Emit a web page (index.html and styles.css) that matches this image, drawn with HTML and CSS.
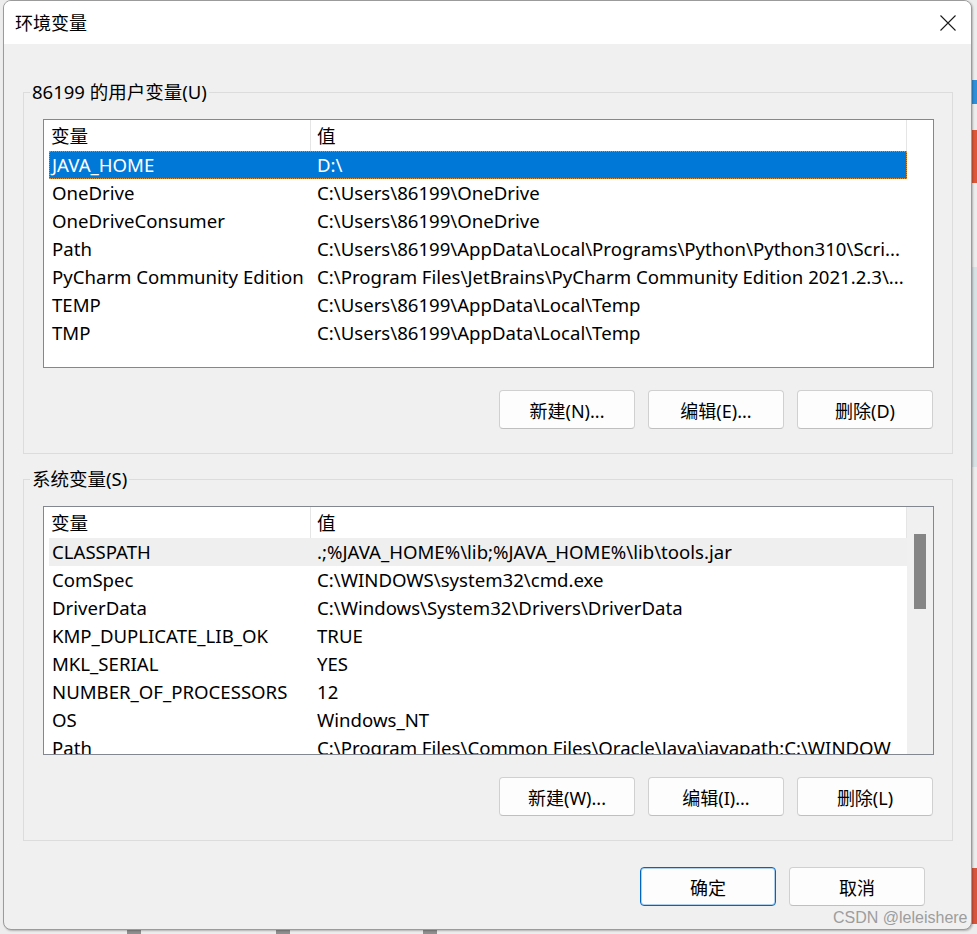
FILE: index.html
```html
<!DOCTYPE html>
<html lang="zh-CN">
<head>
<meta charset="utf-8">
<title>环境变量</title>
<link rel="stylesheet" href="styles.css">
</head>
<body>
<div class="desktop">
  <div class="bg bg-blue"></div>
  <div class="bg bg-red"></div>
  <div class="bg bg-pane"></div>
  <div class="bg bg-red2"></div>
  <div class="bg band b1"></div>
  <div class="bg band b2"></div>
  <div class="bg band b3"></div>
</div>
<div class="window">
  <div class="titlebar">
    <span class="title">环境变量</span>
    <svg class="close" width="16" height="16" viewBox="0 0 16 16" aria-hidden="true"><path d="M0.5 0.5 L15.5 15.5 M15.5 0.5 L0.5 15.5" stroke="#1a1a1a" stroke-width="1.1" fill="none"/></svg>
  </div>
  <div class="content">
    <fieldset class="group">
      <legend>86199 的用户变量(U)</legend>
      <div class="list">
        <div class="list-body">
          <div class="hdr"><div class="hc h1">变量</div><div class="hc h2">值</div></div>
          <div class="row selected"><div class="c1">JAVA_HOME</div><div class="c2">D:\</div></div>
          <div class="row"><div class="c1">OneDrive</div><div class="c2">C:\Users\86199\OneDrive</div></div>
          <div class="row"><div class="c1">OneDriveConsumer</div><div class="c2">C:\Users\86199\OneDrive</div></div>
          <div class="row"><div class="c1">Path</div><div class="c2">C:\Users\86199\AppData\Local\Programs\Python\Python310\Scri...</div></div>
          <div class="row"><div class="c1">PyCharm Community Edition</div><div class="c2">C:\Program Files\JetBrains\PyCharm Community Edition 2021.2.3\...</div></div>
          <div class="row"><div class="c1">TEMP</div><div class="c2">C:\Users\86199\AppData\Local\Temp</div></div>
          <div class="row"><div class="c1">TMP</div><div class="c2">C:\Users\86199\AppData\Local\Temp</div></div>
        </div>
      </div>
      <div class="buttons">
        <button class="btn">新建(N)...</button>
        <button class="btn">编辑(E)...</button>
        <button class="btn">删除(D)</button>
      </div>
    </fieldset>
    <fieldset class="group group2">
      <legend>系统变量(S)</legend>
      <div class="list">
        <div class="list-body">
          <div class="hdr"><div class="hc h1">变量</div><div class="hc h2">值</div></div>
          <div class="row hover"><div class="c1">CLASSPATH</div><div class="c2">.;%JAVA_HOME%\lib;%JAVA_HOME%\lib\tools.jar</div></div>
          <div class="row"><div class="c1">ComSpec</div><div class="c2">C:\WINDOWS\system32\cmd.exe</div></div>
          <div class="row"><div class="c1">DriverData</div><div class="c2">C:\Windows\System32\Drivers\DriverData</div></div>
          <div class="row"><div class="c1">KMP_DUPLICATE_LIB_OK</div><div class="c2">TRUE</div></div>
          <div class="row"><div class="c1">MKL_SERIAL</div><div class="c2">YES</div></div>
          <div class="row"><div class="c1">NUMBER_OF_PROCESSORS</div><div class="c2">12</div></div>
          <div class="row"><div class="c1">OS</div><div class="c2">Windows_NT</div></div>
          <div class="row"><div class="c1">Path</div><div class="c2">C:\Program Files\Common Files\Oracle\Java\javapath;C:\WINDOW</div></div>
        </div>
        <div class="vscroll"><div class="thumb"></div></div>
      </div>
      <div class="buttons">
        <button class="btn">新建(W)...</button>
        <button class="btn">编辑(I)...</button>
        <button class="btn">删除(L)</button>
      </div>
    </fieldset>
    <div class="footer">
      <button class="btn default">确定</button>
      <button class="btn">取消</button>
    </div>
  </div>
</div>
<div class="watermark">CSDN @leleishere</div>
</body>
</html>
```
FILE: styles.css
```css
* { box-sizing: border-box; }
html, body { margin: 0; height: 100%; }
body {
  position: relative;
  overflow: hidden;
  background: #ededed;
  font-family: "Noto Sans", "Noto Sans CJK SC", sans-serif;
  color: #000;
}

/* desktop behind the dialog */
.bg { position: absolute; }
.bg-blue { left: 966px; top: 80px; width: 11px; height: 24px; background: #2f8fd9; }
.bg-red { left: 966px; top: 130px; width: 11px; height: 53px; background: #de5737; }
.bg-pane { left: 966px; top: 267px; width: 11px; height: 200px; background: #d8e1e4; }
.bg-red2 { left: 966px; top: 868px; width: 11px; height: 56px; background: #d9553a; }
.band { top: 925px; height: 9px; width: 14px; background: #8f8f8f; }
.b1 { left: 127px; }
.b2 { left: 276px; }
.b3 { left: 423px; }

.window {
  position: absolute;
  left: 3px;
  top: 0;
  width: 969px;
  height: 930px;
  border: 1px solid #9b9b9b;
  border-radius: 8px;
  background: #f0f0f0;
  overflow: hidden;
  display: flex;
  flex-direction: column;
  box-shadow: 1px 1px 2px rgba(0,0,0,0.25);
}

.titlebar {
  height: 43px;
  flex: none;
  background: #fff;
  display: flex;
  align-items: center;
  justify-content: space-between;
  padding: 0 15px 0 11px;
}
.title { font-size: 18px; line-height: 1; }
.close { display: block; }

.content {
  flex: 1;
  padding: 36px 18px 0 19px;
}

.group {
  margin: 0;
  min-width: 0;
  padding: 15px 18px 24px 19px;
  border: 1px solid #dcdcdc;
}
.group2 { margin-top: 13px; }
.group legend {
  font-size: 18.5px;
  line-height: 24px;
  padding: 0 2px;
  margin-left: -13px;
}

.list {
  height: 249px;
  border: 1px solid #828790;
  background: #fff;
  display: flex;
  overflow: hidden;
}
.list-body {
  flex: 1;
  min-width: 0;
  padding-left: 5px;
  font-size: 18.6px;
}
.hdr {
  display: grid;
  grid-template-columns: 262px 596px;
  width: 858px;
  height: 31px;
}
.hc {
  line-height: 31px;
  border-right: 1px solid #e5e5e5;
  white-space: nowrap;
}
.h1 { padding-left: 2px; }
.h2 { padding-left: 6px; }

.row {
  display: grid;
  grid-template-columns: 262px 596px;
  width: 858px;
  height: 28px;
  line-height: 28px;
  white-space: nowrap;
}
.row > div { overflow: hidden; }
.c1 { padding-left: 3px; }
.c2 { padding-left: 6px; }
.row.selected {
  background: #0078d7;
  color: #fff;
  outline: 1px dotted #e08b36;
  outline-offset: -1px;
}
.row.hover { background: #efefef; }

.vscroll {
  width: 26px;
  flex: none;
  background: #f0f0f0;
  padding: 27px 7px 0 7px;
}
.thumb {
  width: 12px;
  height: 75px;
  background: #858585;
}

.buttons {
  display: flex;
  justify-content: flex-end;
  gap: 13px;
  margin-top: 22px;
  padding-right: 1px;
}
.btn {
  width: 136px;
  height: 39px;
  padding: 0;
  border: 1px solid #d0d0d0;
  border-bottom-color: #bfbfbf;
  border-radius: 4px;
  background: #fdfdfd;
  font-family: inherit;
  font-size: 18px;
  color: #000;
}
.btn.default {
  border-color: #0067c0;
  box-shadow: inset 0 0 0 1px rgba(0,103,192,0.3);
}

.footer {
  display: flex;
  justify-content: flex-end;
  gap: 13px;
  margin-top: 26px;
  padding-right: 28px;
}

.watermark {
  position: absolute;
  left: 833px;
  top: 908px;
  font-family: "Liberation Sans", sans-serif;
  font-size: 16px;
  line-height: 20px;
  color: #9d9d9d;
  white-space: nowrap;
}
```
